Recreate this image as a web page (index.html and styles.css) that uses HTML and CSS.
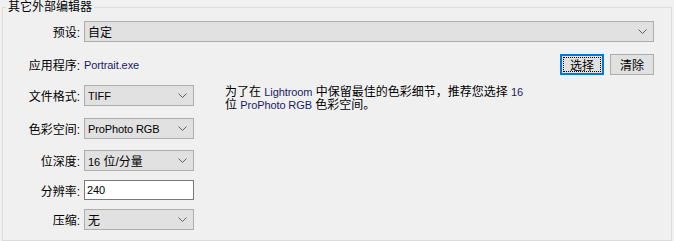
FILE: index.html
```
<!DOCTYPE html>
<html lang="zh-CN">
<head>
<meta charset="utf-8">
<title>其它外部编辑器</title>
<link rel="stylesheet" href="styles.css">
</head>
<body>
<div class="group">
  <div class="title">其它外部编辑器</div>

  <div class="row r-preset">
    <span class="lbl">预设:</span>
    <div class="select wide"><span class="val">自定</span><svg class="chev" width="9" height="5" viewBox="0 0 9 5"><polyline points="0.5,0.5 4.5,4.5 8.5,0.5"/></svg></div>
  </div>

  <div class="row r-app">
    <span class="lbl">应用程序:</span>
    <span class="path lat">Portrait.exe</span>
    <div class="buttons">
      <button class="btn default">选择</button>
      <button class="btn">清除</button>
    </div>
  </div>

  <div class="row r-format">
    <span class="lbl">文件格式:</span>
    <div class="select"><span class="val lat">TIFF</span><svg class="chev" width="9" height="5" viewBox="0 0 9 5"><polyline points="0.5,0.5 4.5,4.5 8.5,0.5"/></svg></div>
    <p class="note">为了在 <span class="lat blue">Lightroom</span> 中保留最佳的色彩细节，推荐您选择 <span class="lat blue">16</span><br>位 <span class="lat blue">ProPhoto RGB</span> 色彩空间。</p>
  </div>

  <div class="row r-space">
    <span class="lbl">色彩空间:</span>
    <div class="select"><span class="val lat">ProPhoto RGB</span><svg class="chev" width="9" height="5" viewBox="0 0 9 5"><polyline points="0.5,0.5 4.5,4.5 8.5,0.5"/></svg></div>
  </div>

  <div class="row r-depth">
    <span class="lbl">位深度:</span>
    <div class="select"><span class="val"><span class="lat">16</span> 位/分量</span><svg class="chev" width="9" height="5" viewBox="0 0 9 5"><polyline points="0.5,0.5 4.5,4.5 8.5,0.5"/></svg></div>
  </div>

  <div class="row r-res">
    <span class="lbl">分辨率:</span>
    <div class="input"><span class="lat">240</span></div>
  </div>

  <div class="row r-comp">
    <span class="lbl">压缩:</span>
    <div class="select"><span class="val">无</span><svg class="chev" width="9" height="5" viewBox="0 0 9 5"><polyline points="0.5,0.5 4.5,4.5 8.5,0.5"/></svg></div>
  </div>
</div>
</body>
</html>
```

FILE: styles.css
```
html, body {
  margin: 0;
  padding: 0;
  background: #f0f0f0;
}

body {
  font-family: "Liberation Sans", "Noto Sans CJK SC", sans-serif;
  font-size: 12px;
  color: #000;
  width: 674px;
  height: 241px;
  overflow: hidden;
}

.group {
  position: relative;
  box-sizing: border-box;
  margin: 7px 2px 0 2px;
  height: 234px;
  border: 1px solid #dcdcdc;
  padding-top: 13px;
}

.title {
  position: absolute;
  top: -8px;
  left: 3px;
  padding: 0 2px;
  background: #f0f0f0;
  line-height: 15px;
  font-size: 12px;
}

.row {
  display: flex;
  align-items: center;
  height: 21px;
  margin-right: 17px;
}

.r-app { margin-top: 12px; }
.r-format { margin-top: 10px; }
.r-space { margin-top: 12px; }
.r-depth { margin-top: 11px; }
.r-res { margin-top: 9px; height: 20px; }
.r-comp { margin-top: 9px; }

.lbl {
  width: 77px;
  margin-right: 4px;
  text-align: right;
  white-space: nowrap;
  flex: none;
}

.lat {
  font-size: 11px;
  letter-spacing: -0.1px;
}

.blue {
  color: #1a1a66;
}

.path {
  color: #1a1a66;
}

.select {
  box-sizing: border-box;
  display: flex;
  align-items: center;
  width: 110px;
  height: 21px;
  padding-left: 3px;
  border: 1px solid #adadad;
  background: #e1e1e1;
  flex: none;
}

.select.wide {
  flex: 1;
  width: auto;
}

.val {
  white-space: nowrap;
}

.chev {
  margin-left: auto;
  margin-right: 6px;
  fill: none;
  stroke: #606060;
  stroke-width: 1;
}

.input {
  box-sizing: border-box;
  display: flex;
  align-items: center;
  width: 110px;
  height: 20px;
  padding-left: 2px;
  border: 1px solid #7a7a7a;
  background: #fff;
}

.buttons {
  margin-left: auto;
  display: flex;
  gap: 6px;
}

.btn {
  box-sizing: border-box;
  width: 44px;
  height: 21px;
  padding: 0;
  border: 1px solid #adadad;
  background: #e1e1e1;
  font-family: "Noto Sans CJK SC", sans-serif;
  font-size: 12px;
  color: #000;
  line-height: 17px;
}

.btn.default {
  border: 1px solid #0078d7;
  box-shadow: inset 0 0 0 1px #0078d7;
  outline: 1px dotted #000;
  outline-offset: -4px;
}

.note {
  align-self: flex-start;
  margin: 1px 0 0 31px;
  line-height: 13px;
  white-space: nowrap;
}
```
